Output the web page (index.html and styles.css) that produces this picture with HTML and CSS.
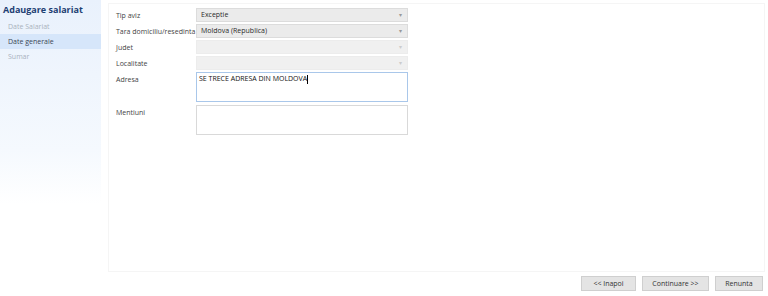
FILE: index.html
```html
<!DOCTYPE html>
<html lang="ro">
<head>
    <meta charset="UTF-8">
    <title>Adaugare salariat</title>
    <link rel="stylesheet" href="styles.css">
</head>
<body>
    <div class="main">
        <div class="sidebar">
            <h2>Adaugare salariat</h2>
            <div class="step">Date Salariat</div>
            <div class="step active">Date generale</div>
            <div class="step">Sumar</div>
        </div>

        <div class="panel">
            <div class="row">
                <label>Tip aviz</label>
                <div class="combo">Exceptie<span class="arrow">&#9662;</span></div>
            </div>
            <div class="row">
                <label>Tara domiciliu/resedinta</label>
                <div class="combo">Moldova (Republica)<span class="arrow">&#9662;</span></div>
            </div>
            <div class="row">
                <label>Judet</label>
                <div class="combo disabled"><span class="arrow">&#9662;</span></div>
            </div>
            <div class="row">
                <label>Localitate</label>
                <div class="combo disabled"><span class="arrow">&#9662;</span></div>
            </div>
            <div class="row tall">
                <label>Adresa</label>
                <div class="memo focused">SE TRECE ADRESA DIN MOLDOVA<span class="caret"></span></div>
            </div>
            <div class="row tall">
                <label>Mentiuni</label>
                <div class="memo"></div>
            </div>
        </div>
    </div>

    <div class="footer">
        <button class="back">&lt;&lt; Inapoi</button>
        <button class="next">Continuare &gt;&gt;</button>
        <button class="cancel">Renunta</button>
    </div>
</body>
</html>
```

FILE: styles.css
```css
html, body {
    margin: 0;
    padding: 0;
    height: 296px;
    overflow: hidden;
}

body {
    font-family: "Open Sans", "Noto Sans", sans-serif;
    font-size: 7px;
    color: #333;
    background-color: #fff;
    display: flex;
    flex-direction: column;
}

.main {
    display: flex;
    height: 272px;
}

.sidebar {
    width: 101px;
    background: linear-gradient(#e9f1fc, #f5f9fe 55%, #fff 75%);
    padding-top: 4px;
    box-sizing: border-box;
}

.sidebar h2 {
    margin: 0 0 3px 3px;
    font-size: 9px;
    font-weight: bold;
    color: #1e3f73;
    line-height: 12px;
}

.step {
    padding-left: 8px;
    height: 15px;
    line-height: 15px;
    color: #a9b2bd;
}

.step.active {
    background-color: #d6e6fa;
    color: #3b4656;
}

.panel {
    flex: 1;
    margin: 3px 3px 0 7px;
    border: 1px solid #f5f5f5;
    padding: 4px 0 0 7px;
}

.row {
    display: flex;
    align-items: center;
    height: 14px;
    margin-bottom: 2px;
}

.row.tall {
    align-items: flex-start;
    height: 30px;
    margin-bottom: 3px;
}

.row label {
    width: 80px;
    color: #444;
}

.row.tall label {
    padding-top: 3px;
}

.combo {
    width: 212px;
    height: 14px;
    box-sizing: border-box;
    border: 1px solid #dcdcdc;
    background-color: #ebebeb;
    color: #2a2a2a;
    padding-left: 4px;
    line-height: 12px;
    display: flex;
}

.combo.disabled {
    background-color: #f0f0f0;
    border-color: #ececec;
}

.arrow {
    margin-left: auto;
    color: #999;
    font-size: 6px;
    padding-right: 5px;
}

.combo.disabled .arrow {
    color: #ccc;
}

.memo {
    width: 212px;
    height: 30px;
    box-sizing: border-box;
    border: 1px solid #d9d9d9;
    background-color: #fff;
    color: #111;
    padding: 1px 2px;
    line-height: 10px;
}

.memo.focused {
    border-color: #a9c7ea;
}

.caret {
    display: inline-block;
    width: 1px;
    height: 9px;
    background-color: #000;
    vertical-align: middle;
}

.footer {
    display: flex;
    justify-content: flex-end;
    padding: 4px 5px 0 0;
}

.footer button {
    font-family: inherit;
    font-size: 7px;
    color: #333;
    height: 15px;
    background-color: #e4e4e4;
    border: 1px solid #cfcfcf;
    margin: 0;
    padding: 0;
}

.back {
    width: 55px;
}

.next {
    width: 67px;
    margin-left: 6px !important;
}

.cancel {
    width: 48px;
    margin-left: 6px !important;
}
```
